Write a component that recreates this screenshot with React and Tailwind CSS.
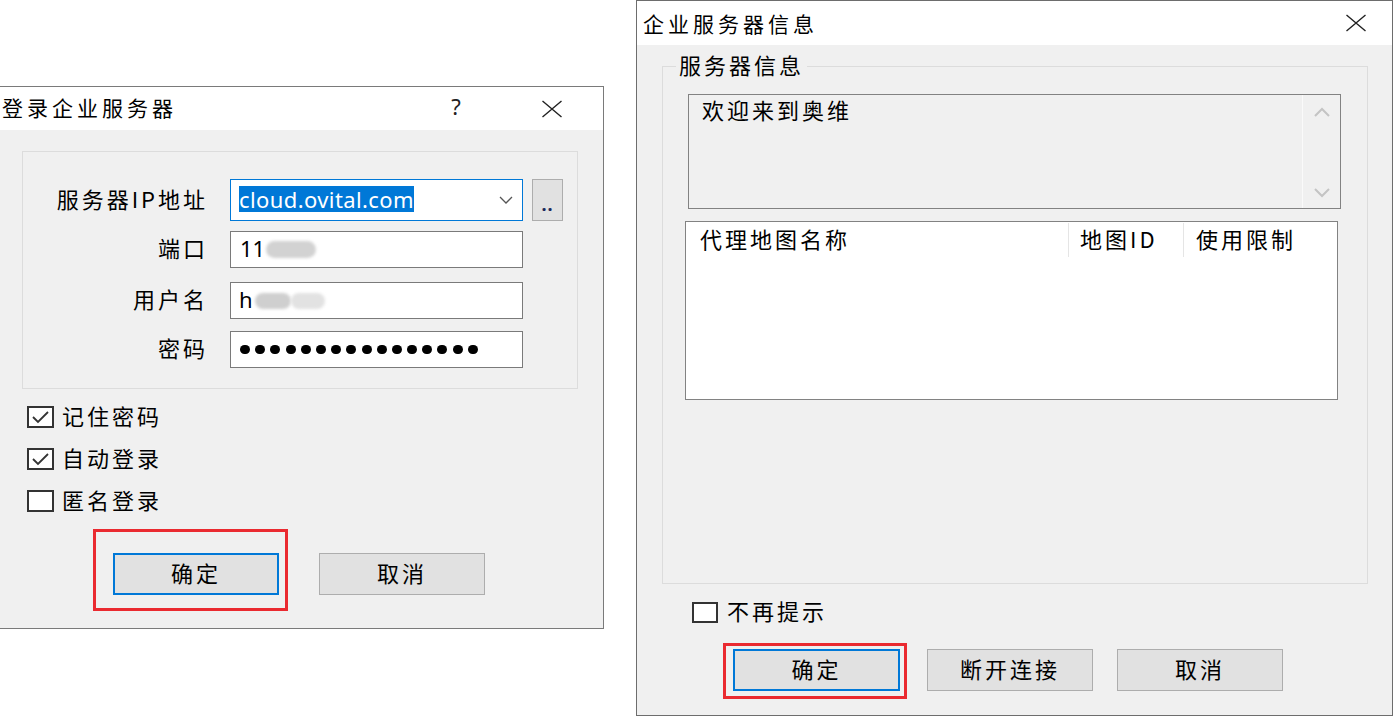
import React from "react";

const cjk = "font-['Noto_Sans_CJK_SC',sans-serif]";
const body = `${cjk} text-[22px] tracking-[3px] text-black leading-[28px]`;
const shift = "pb-[5px]";
const title = `${cjk} text-[21px] tracking-[4px] text-black leading-[28px]`;

function XIcon() {
  return (
    <svg width="22" height="18" viewBox="0 0 22 18" fill="none">
      <path d="M1.5 1L20.5 17M20.5 1L1.5 17" stroke="#222" strokeWidth="1.4" />
    </svg>
  );
}

function CheckMark() {
  return (
    <svg width="23" height="18" viewBox="0 0 23 18" fill="none">
      <path d="M4 9L9 14L19 4" stroke="#333" strokeWidth="1.8" />
    </svg>
  );
}

function Chevron({ up }) {
  return (
    <svg width="16" height="10" viewBox="0 0 16 10" fill="none">
      <path d={up ? "M1 9L8 2L15 9" : "M1 1L8 8L15 1"} stroke="#c4c4c4" strokeWidth="2" />
    </svg>
  );
}

function Btn({ children, def, className = "" }) {
  return (
    <div
      className={`h-[42px] w-[166px] bg-[#e1e1e1] flex items-center justify-center ${
        def ? "border-2 border-[#0078d7]" : "border border-[#adadad]"
      } ${className}`}
    >
      <span className={`${body} ${shift}`}>{children}</span>
    </div>
  );
}

function LeftDialog() {
  const dots = Array.from({ length: 16 });
  return (
    <div className="mt-[86px] w-[604px] h-[543px] shrink-0 border-t border-r border-b border-[#7a7a7a] bg-[#f0f0f0] flex flex-col">
      <div className="h-[43px] bg-white flex items-center shrink-0">
        <span className={`ml-[2px] pb-[4px] ${title}`}>登录企业服务器</span>
        <span className="ml-auto w-[30px] pb-[5px] text-center font-['Noto_Sans',sans-serif] text-[22px] leading-none text-[#222]">?</span>
        <div className="ml-[61px] mr-[31px] w-[40px] flex justify-center">
          <XIcon />
        </div>
      </div>

      <div className="mt-[21px] ml-[22px] w-[556px] h-[238px] border border-[#dcdcdc] pt-[27px] shrink-0">
        <div className="flex items-center h-[42px]">
          <div className={`w-[185px] text-right ${body} ${shift}`}>服务器IP地址</div>
          <div className="ml-[22px] w-[293px] h-[42px] bg-white border border-[#0078d7] flex items-center">
            <span className="ml-[8px] mb-[3px] bg-[#0078d7] text-white font-['Noto_Sans',sans-serif] text-[22px] leading-[26px] tracking-[0.4px]">cloud.ovital.com</span>
            <div className="ml-auto mr-[9px] flex items-center">
              <svg width="14" height="8" viewBox="0 0 14 8" fill="none">
                <path d="M1 1L7 7L13 1" stroke="#555" strokeWidth="1.3" />
              </svg>
            </div>
          </div>
          <div className="ml-[9px] w-[31px] h-[42px] bg-[#e1e1e1] border border-[#adadad] flex items-end justify-center pb-[7px]">
            <span className="font-['Noto_Sans',sans-serif] text-[18px] leading-none text-[#1a2a5a] font-bold tracking-[1px]">..</span>
          </div>
        </div>

        <div className="flex items-center h-[37px] mt-[10px]">
          <div className={`w-[185px] text-right ${body} ${shift}`}>端口</div>
          <div className="ml-[22px] w-[293px] h-[37px] bg-white border border-[#7a7a7a] flex items-center">
            <span className="ml-[9px] pb-[3px] font-['Noto_Sans',sans-serif] text-[22px] leading-none text-black">11</span>
            <div className="ml-[1px] w-[50px] h-[17px] rounded-full bg-[#d2d2d2] blur-[1.5px]" />
          </div>
        </div>

        <div className="flex items-center h-[37px] mt-[14px]">
          <div className={`w-[185px] text-right ${body} ${shift}`}>用户名</div>
          <div className="ml-[22px] w-[293px] h-[37px] bg-white border border-[#7a7a7a] flex items-center">
            <span className="ml-[8px] pb-[3px] font-['Noto_Sans',sans-serif] text-[22px] leading-none text-black">h</span>
            <div className="ml-[2px] w-[36px] h-[16px] rounded-full bg-[#cfcfcf] blur-[1.5px]" />
            <div className="w-[34px] h-[16px] rounded-full bg-[#e2e2e2] blur-[1.5px]" />
          </div>
        </div>

        <div className="flex items-center h-[37px] mt-[12px]">
          <div className={`w-[185px] text-right ${body} ${shift}`}>密码</div>
          <div className="ml-[22px] w-[293px] h-[37px] bg-white border border-[#7a7a7a] flex items-center">
            <div className="ml-[9px] flex gap-[5.2px]">
              {dots.map((_, i) => (
                <div key={i} className="w-[10px] h-[9px] rounded-full bg-black" />
              ))}
            </div>
          </div>
        </div>
      </div>

      <div className="mt-[7px] flex flex-col">
        {[
          ["记住密码", true],
          ["自动登录", true],
          ["匿名登录", false],
        ].map(([t, c]) => (
          <div key={t} className="h-[42px] flex items-center">
            <div className="ml-[27px] w-[27px] h-[22px] border-2 border-[#333] bg-white flex items-center justify-center">
              {c ? <CheckMark /> : null}
            </div>
            <span className={`ml-[8px] ${body} ${shift}`}>{t}</span>
          </div>
        ))}
      </div>

      <div className="mt-[31px] ml-[113px] flex">
        <div className="relative">
          <Btn def>确定</Btn>
          <div className="absolute left-[-20px] top-[-24px] w-[195px] h-[82px] border-[3px] border-[#ea2a30]" />
        </div>
        <Btn className="ml-[40px]">取消</Btn>
      </div>
    </div>
  );
}

function RightDialog() {
  return (
    <div className="ml-[32px] w-[757px] h-[716px] shrink-0 border border-[#6d6d6d] bg-[#f0f0f0] flex flex-col">
      <div className="h-[44px] bg-white flex items-center shrink-0">
        <span className={`ml-[6px] pb-[1px] ${title}`}>企业服务器信息</span>
        <div className="ml-auto mr-[16px] w-[40px] flex justify-center">
          <XIcon />
        </div>
      </div>

      <div className="relative mt-[21px] ml-[25px] w-[706px] h-[518px] border border-[#dcdcdc] shrink-0">
        <span className={`absolute top-[-17px] left-[13px] px-[3px] bg-[#f0f0f0] ${body}`}>服务器信息</span>

        <div className="mt-[27px] ml-[25px] w-[653px] h-[115px] border border-[#828282] flex">
          <div className={`flex-1 pl-[13px] pt-[0px] ${body}`}>欢迎来到奥维</div>
          <div className="w-[38px] border-l border-[#fafafa] flex flex-col items-center justify-between pt-[12px] pb-[10px]">
            <Chevron up />
            <Chevron />
          </div>
        </div>

        <div className="mt-[12px] ml-[22px] w-[653px] h-[179px] border border-[#828282] bg-white">
          <div className="flex h-[36px] items-center">
            <div className={`w-[382px] pl-[14px] ${body} ${shift}`}>代理地图名称</div>
            <div className="w-px h-[34px] self-start mt-[1px] bg-[#e5e5e5]" />
            <div className={`w-[114px] pl-[11px] ${body} ${shift}`}>地图ID</div>
            <div className="w-px h-[34px] self-start mt-[1px] bg-[#e5e5e5]" />
            <div className={`pl-[12px] ${body} ${shift}`}>使用限制</div>
          </div>
        </div>
      </div>

      <div className="mt-[16px] h-[24px] flex items-center">
        <div className="ml-[55px] w-[26px] h-[21px] border-2 border-[#333] bg-white" />
        <span className={`ml-[9px] ${body} ${shift}`}>不再提示</span>
      </div>

      <div className="mt-[25px] ml-[96px] flex">
        <div className="relative">
          <Btn def className="w-[167px]">确定</Btn>
          <div className="absolute left-[-10px] top-[-6px] w-[184px] h-[56px] border-[3px] border-[#ea2a30]" />
        </div>
        <Btn className="ml-[27px]">断开连接</Btn>
        <Btn className="ml-[24px]">取消</Btn>
      </div>
    </div>
  );
}

export default function App() {
  return (
    <div className="w-[1393px] h-[716px] bg-white flex items-start overflow-hidden">
      <LeftDialog />
      <RightDialog />
    </div>
  );
}
